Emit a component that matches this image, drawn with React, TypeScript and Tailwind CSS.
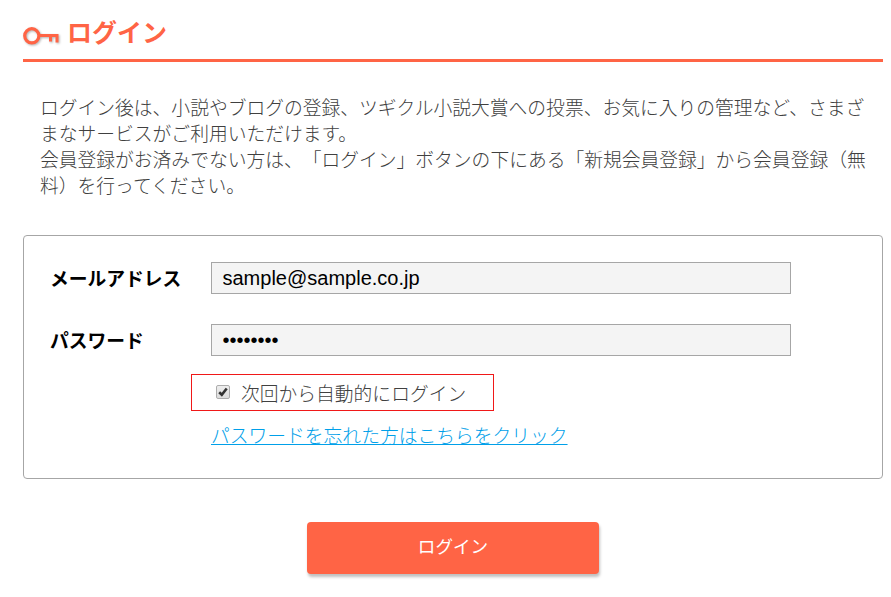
import React, { useState } from "react";

function KeyIcon() {
  return (
    <svg width="38" height="20" viewBox="0 0 38 20" fill="none" className="shrink-0 drop-shadow-[1px_1px_1px_rgba(0,0,0,0.3)]">
      <circle cx="8.8" cy="8.8" r="7.1" stroke="#ff6445" strokeWidth="3.2" />
      <path d="M16 8.5H35.5M27.5 8.5V14.5M34 8.5V15.5" stroke="#ff6445" strokeWidth="3" />
    </svg>
  );
}

interface FieldProps {
  id: string;
  label: string;
  type: string;
  value: string;
  onChange: (value: string) => void;
}

function Field({ id, label, type, value, onChange }: FieldProps) {
  return (
    <div className="flex h-8 items-center">
      <label htmlFor={id} className="w-[161px] shrink-0 whitespace-nowrap font-bold text-black">
        {label}
      </label>
      <input
        id={id}
        type={type}
        value={value}
        onChange={(e) => onChange(e.target.value)}
        className="h-8 w-[580px] border border-[#a6a6a6] bg-[#f4f4f4] px-[10.5px] font-['Liberation_Sans',sans-serif] text-xl text-black outline-none"
      />
    </div>
  );
}

export default function App() {
  const [email, setEmail] = useState("sample@sample.co.jp");
  const [password, setPassword] = useState("password");
  const [remember, setRemember] = useState(true);

  return (
    <div lang="ja" className="h-[597px] w-[891px] overflow-hidden bg-white pl-[23px] pr-2 font-['Noto_Sans_CJK_JP',sans-serif] text-[18.78px] leading-[26px] text-[#404040] [text-spacing-trim:space-all]">
      <header className="flex h-[62px] items-start border-b-3 border-[#ff6445] pt-[15px]">
        <div className="mt-3">
          <KeyIcon />
        </div>
        <h1 className="ml-[6px] text-[25px] leading-8 font-bold text-[#ff6445]">ログイン</h1>
      </header>

      <p className="mt-8 pl-[17px] font-light">
        ログイン後は、小説やブログの登録、ツギクル小説大賞への投票、お気に入りの管理など、さまざ
        <br />
        まなサービスがご利用いただけます。
        <br />
        会員登録がお済みでない方は、「ログイン」ボタンの下にある「新規会員登録」から会員登録（無
        <br />
        料）を行ってください。
      </p>

      <form onSubmit={(e) => e.preventDefault()}>
        <div className="mt-[37px] h-[244px] rounded border border-[#a6a6a6] pt-[26px] pl-[26px]">
          <Field id="email" label="メールアドレス" type="email" value={email} onChange={setEmail} />
          <div className="mt-[30px]">
            <Field id="password" label="パスワード" type="password" value={password} onChange={setPassword} />
          </div>

          <label className="mt-[18px] ml-[141px] flex h-[37px] w-[303px] items-center border border-[#f01818] pl-6 font-light">
            <input type="checkbox" className="peer sr-only" checked={remember} onChange={(e) => setRemember(e.target.checked)} />
            <span className="mr-[11px] mb-0.5 flex size-[14px] shrink-0 items-center justify-center rounded-[2px] border border-[#adadad] bg-linear-to-b from-[#eee] to-[#ddd]">
              {remember && (
                <svg width="10" height="10" viewBox="0 0 10 10" fill="none">
                  <path d="M1.2 5.3L3.8 7.8L8.7 1.5" stroke="#333" strokeWidth="2.6" />
                </svg>
              )}
            </span>
            次回から自動的にログイン
          </label>

          <a href="#" className="mt-[11px] ml-[161px] inline-block font-light text-[#00a0e9] underline">
            パスワードを忘れた方はこちらをクリック
          </a>
        </div>

        <button
          type="submit"
          className="mt-[43px] ml-[284px] block h-[52px] w-[292px] rounded bg-[#ff6445] pb-1 text-center text-[17.6px] font-normal text-white shadow-[1px_3px_3px_rgba(0,0,0,0.25)]"
        >
          ログイン
        </button>
      </form>
    </div>
  );
}
